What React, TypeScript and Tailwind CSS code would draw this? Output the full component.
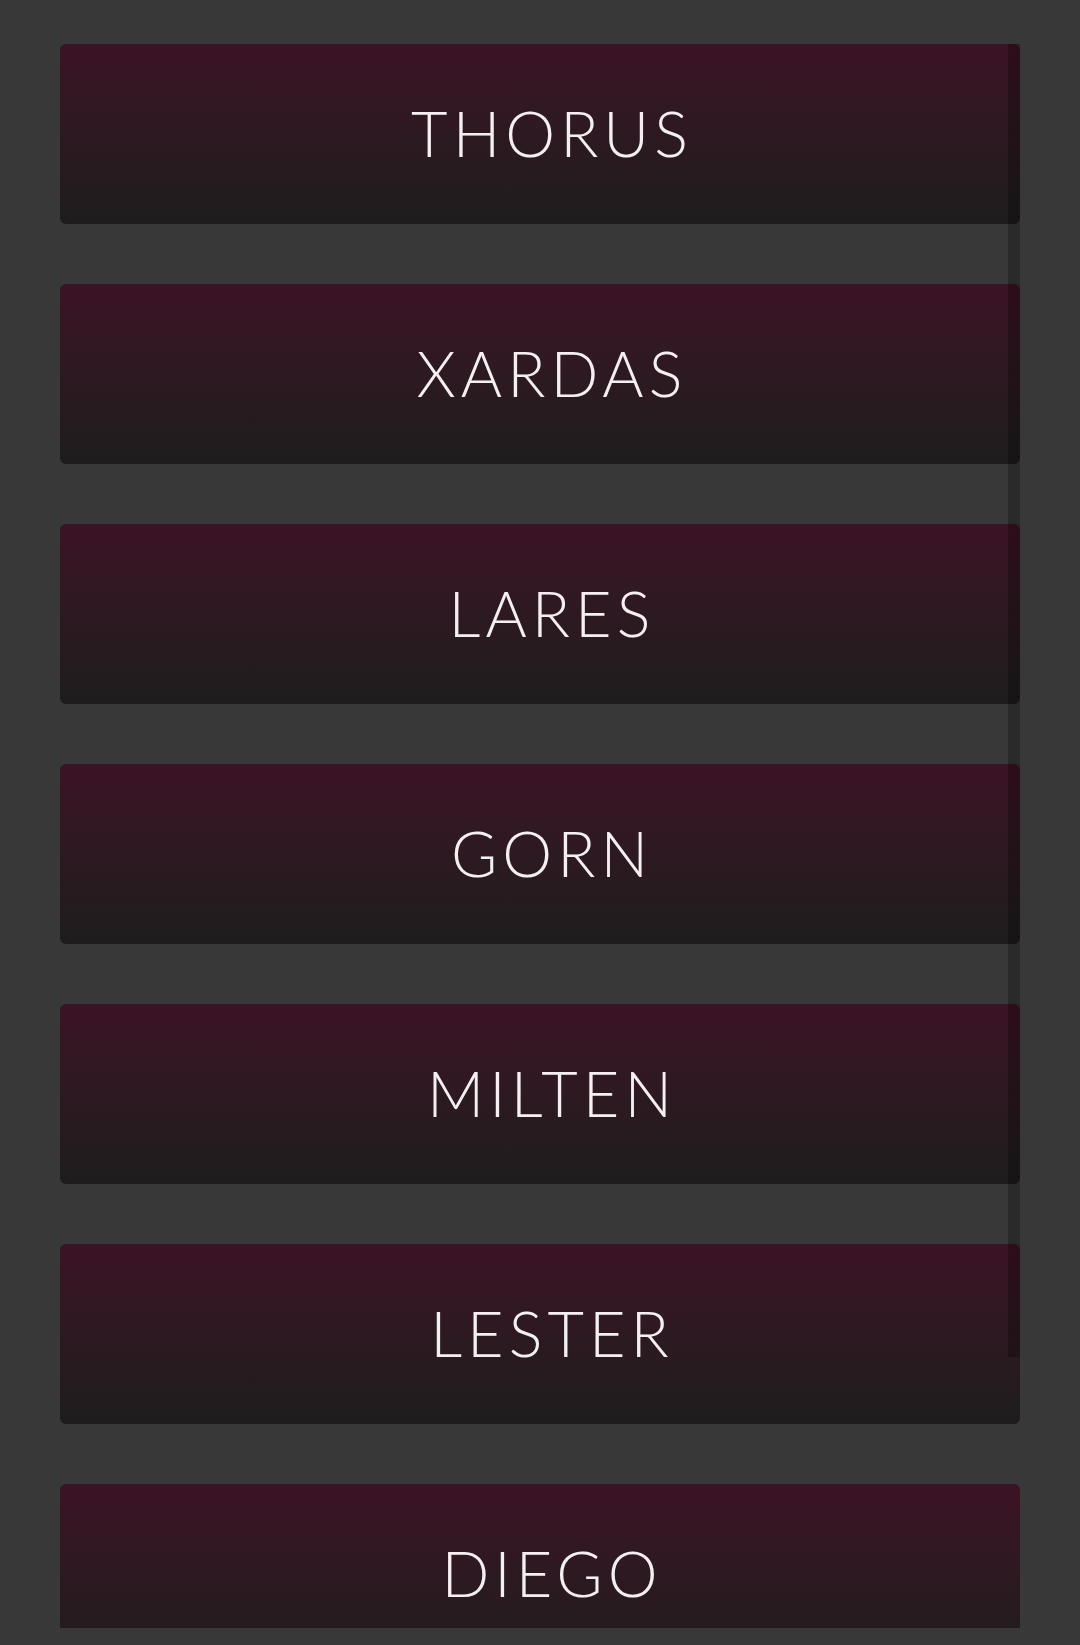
const names = ["THORUS", "XARDAS", "LARES", "GORN", "MILTEN", "LESTER", "DIEGO"];

export default function App() {
  return (
    <div className="min-h-[1645px] w-full bg-[#383838]">
      <div className="relative h-[1628px] overflow-hidden px-[60px] pt-[44px]">
        <div className="flex flex-col gap-[60px]">
          {names.map((n) => (
            <button
              key={n}
              type="button"
              className="flex h-[180px] w-full shrink-0 items-center justify-center rounded-[6px] bg-gradient-to-b from-[#3b1325] to-[#1d1d1d] pb-[4px] pl-[24px]"
            >
              <span className="font-['Lato','Open_Sans',sans-serif] text-[63px] font-light leading-none tracking-[0.08em] text-[#f4f0f2]">
                {n}
              </span>
            </button>
          ))}
        </div>
        {/* scrollbar track */}
        <div className="pointer-events-none absolute right-[60px] top-[44px] h-[1313px] w-[12px] bg-black/25" />
      </div>
    </div>
  );
}
